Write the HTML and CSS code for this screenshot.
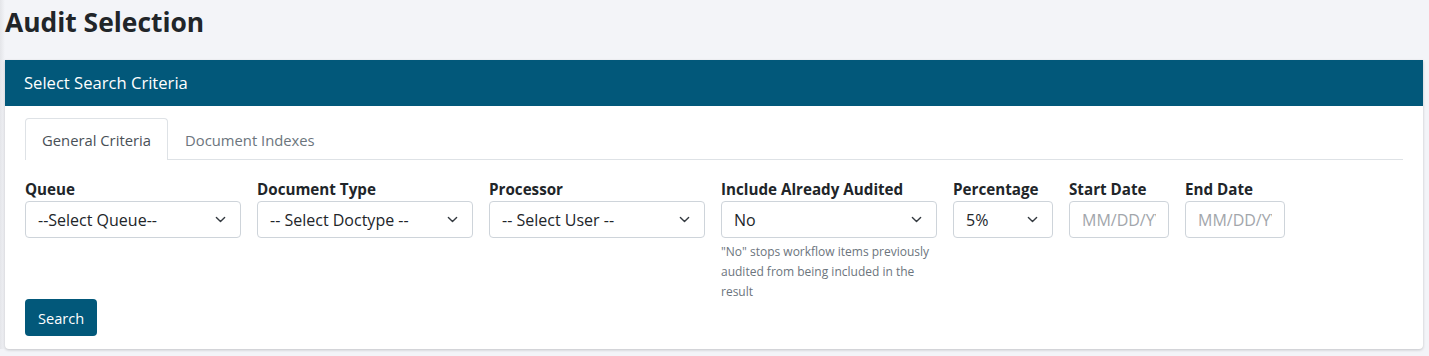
FILE: index.html
```html
<!DOCTYPE html>
<html lang="en">
<head>
  <meta charset="UTF-8">
  <title>Audit Selection</title>
  <link rel="stylesheet" href="styles.css">
</head>
<body>
  <div class="page">
    <h1 class="page-title">Audit Selection</h1>

    <!-- Search card -->
    <div class="card">
      <div class="card-header">Select Search Criteria</div>
      <div class="card-body">
        <ul class="tabs">
          <li class="tab active">General Criteria</li>
          <li class="tab">Document Indexes</li>
        </ul>

        <div class="criteria">
          <div class="field wide">
            <label>Queue</label>
            <div class="select"><span>--Select Queue--</span><svg viewBox="0 0 16 16"><path d="M2 5l6 6 6-6"/></svg></div>
          </div>
          <div class="field wide">
            <label>Document Type</label>
            <div class="select"><span>-- Select Doctype --</span><svg viewBox="0 0 16 16"><path d="M2 5l6 6 6-6"/></svg></div>
          </div>
          <div class="field wide">
            <label>Processor</label>
            <div class="select"><span>-- Select User --</span><svg viewBox="0 0 16 16"><path d="M2 5l6 6 6-6"/></svg></div>
          </div>
          <div class="field wide">
            <label>Include Already Audited</label>
            <div class="select"><span>No</span><svg viewBox="0 0 16 16"><path d="M2 5l6 6 6-6"/></svg></div>
            <p class="help">"No" stops workflow items previously audited from being included in the result</p>
          </div>
          <div class="field narrow">
            <label>Percentage</label>
            <div class="select"><span>5%</span><svg viewBox="0 0 16 16"><path d="M2 5l6 6 6-6"/></svg></div>
          </div>
          <div class="field narrow">
            <label>Start Date</label>
            <input class="input" type="text" placeholder="MM/DD/YYYY">
          </div>
          <div class="field narrow">
            <label>End Date</label>
            <input class="input" type="text" placeholder="MM/DD/YYYY">
          </div>
        </div>

        <button class="btn">Search</button>
      </div>
    </div>
  </div>
</body>
</html>
```

FILE: styles.css
```css
body {
  margin: 0;
  background-color: #f3f4f8;
  font-family: 'Open Sans', 'Noto Sans', sans-serif;
  color: #212529;
  min-height: 356px;
}

.page {
  padding: 0 6px 0 5px;
  background: linear-gradient(to right, #e4e5e9 0, #f3f4f8 5px);
}

.page-title {
  margin: 0;
  padding: 3px 0 0 0;
  height: 57px;
  font-size: 26.4px;
  font-weight: 700;
  line-height: 38px;
  color: #212529;
}

/* Card */
.card {
  background: #fff;
  border-radius: 0 0 4px 4px;
  box-shadow: 0 1px 3px rgba(0, 0, 0, 0.2);
}

.card-header {
  background-color: #02587a;
  color: #fff;
  height: 46px;
  line-height: 46px;
  padding: 0 19px;
  font-size: 16.6px;
}

.card-body {
  padding: 12px 20px 13px 20px;
}

/* Tabs */
.tabs {
  list-style: none;
  margin: 0;
  padding: 0;
  display: flex;
  border-bottom: 1px solid #dee2e6;
}

.tab {
  padding: 0 16px;
  height: 40px;
  line-height: 42px;
  font-size: 14.8px;
  color: #6c757d;
  border: 1px solid transparent;
  border-bottom: none;
  border-radius: 4px 4px 0 0;
  margin-bottom: -1px;
}

.tab.active {
  color: #495057;
  background: #fff;
  border-color: #dee2e6;
  height: 41px;
}

/* Form row */
.criteria {
  display: flex;
  gap: 16px;
  margin-top: 20px;
  align-items: flex-start;
}

.field.wide { width: 216px; }
.field.narrow { width: 100px; }

.field label {
  display: block;
  font-size: 15.2px;
  font-weight: 700;
  line-height: 18px;
  margin-bottom: 3px;
}

.select, .input {
  box-sizing: border-box;
  height: 37px;
  border: 1px solid #ced4da;
  border-radius: 4px;
  background: #fff;
  font-family: inherit;
  font-size: 16px;
  color: #212529;
}

.select {
  display: flex;
  align-items: center;
  justify-content: space-between;
  padding: 0 14px 0 12px;
}

.select svg {
  width: 11px;
  height: 11px;
  fill: none;
  stroke: #343a40;
  stroke-width: 2;
  stroke-linecap: round;
  stroke-linejoin: round;
}

.input {
  width: 100%;
  padding: 0 12px;
  outline: none;
}

.input::placeholder {
  color: #a2a6ab;
}

.help {
  margin: 4px 0 0 0;
  font-size: 12px;
  line-height: 20px;
  color: #6c757d;
}

.btn {
  display: block;
  margin-top: -3px;
  height: 37px;
  padding: 0 13px;
  border: none;
  border-radius: 4px;
  background-color: #02587a;
  color: #fff;
  font-family: inherit;
  font-size: 14.6px;
}
```
